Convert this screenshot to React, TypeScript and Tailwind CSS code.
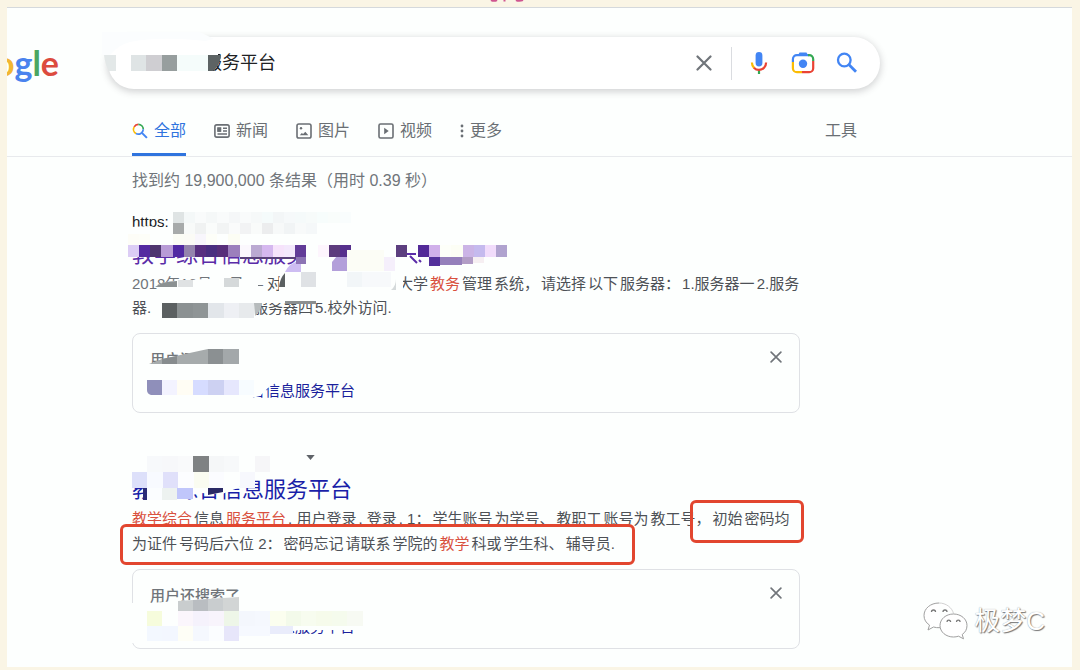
import React from "react";

type Cell = [number, number, number, number, string];

const PAPER = "#fdfffe";

function Mosaic({ box, cells, children }: { box: string; cells: Cell[]; children?: React.ReactNode }) {
  const [, , w, h] = box.split(" ");
  return (
    <svg
      aria-hidden="true"
      viewBox={box}
      width={w}
      height={h}
      className="pointer-events-none absolute -left-3 top-0 max-w-none"
    >
      {children}
      <g shapeRendering="crispEdges">
        {cells.map(([x, y, cw, ch, fill], i) => (
          <rect key={i} x={x} y={y} width={cw} height={ch} fill={fill} />
        ))}
      </g>
    </svg>
  );
}

function row(x: number, y: number, size: number, h: number, fills: string[]): Cell[] {
  return fills
    .map((f, i): Cell => {
      const left = Math.round(x + i * size);
      return [left, y, Math.round(x + (i + 1) * size) - left, h, f];
    })
    .filter((c) => c[4] !== "");
}

function CloseIcon({ size }: { size: number }) {
  return (
    <svg viewBox="0 0 16 16" width={size} height={size} fill="none" stroke="#70757a" strokeWidth="2.2" strokeLinecap="round" aria-hidden="true">
      <path d="M1.5 1.5l13 13M14.5 1.5l-13 13" />
    </svg>
  );
}

function SearchBar() {
  return (
    <form className="relative flex h-[52px] w-[772px] items-center rounded-full bg-white pr-[21px] pl-[96px] shadow-[0_2px_7px_1px_rgba(64,60,67,0.22)]">
      <input
        aria-label="搜索"
        defaultValue="服务平台"
        className="min-w-0 flex-1 bg-transparent text-[18px] text-[#202124] outline-none"
      />
      <svg aria-hidden="true" viewBox="92 27 150 72" width="150" height="72" className="pointer-events-none absolute -top-[10px] -left-[16px]">
        <path d="M102 32H200L214 39L205 41Q160 36 130 42Q118 45 110 55H102Z" fill="#fbfdfe" />
        <path d="M130 53H218V62Q216 70 208 73H130Z" fill="#ffffff" />
        <g shapeRendering="crispEdges">
          <rect x="131" y="55" width="15" height="16" fill="#dfe4e5" />
          <rect x="146" y="55" width="16" height="16" fill="#cfced2" />
          <rect x="162" y="55" width="15" height="16" fill="#979e9e" />
          <rect x="177" y="55" width="31" height="16" fill="#f5fcfb" />
        </g>
        <path d="M104 55H116V71H109Q105 64 104 55Z" fill="#e3e8e8" />
        <path d="M208 55H221Q220 66 213 71H208Z" fill="#5d6364" />
      </svg>
      <button type="button" aria-label="清除" className="grid size-6 place-items-center">
        <CloseIcon size={16} />
      </button>
      <span className="mr-[15px] ml-[15px] h-[33px] w-px bg-[#dadce0]" />
      <div className="flex gap-5">
        <button type="button" aria-label="语音搜索" className="grid size-6 place-items-center">
          <svg viewBox="0 0 24 24" width="24" height="24" fill="none" aria-hidden="true">
            <rect x="8.6" y="1" width="6.8" height="14.4" rx="3.4" fill="#4285f4" />
            <path d="M12 18.6V23" stroke="#34a853" strokeWidth="2.2" />
            <path d="M4.9 11.6c0 2.3.9 4 2.2 5.3" stroke="#fbbc04" strokeWidth="2.2" />
            <path d="M6.9 16.7c1.3 1.4 3.1 2.2 5.1 2.2 4 0 7.1-3.2 7.1-7.3" stroke="#ea4335" strokeWidth="2.2" />
          </svg>
        </button>
        <button type="button" aria-label="按图搜索" className="grid size-6 place-items-center">
          <svg viewBox="0 0 24 24" width="24" height="24" fill="none" strokeWidth="2.2" aria-hidden="true">
            <path d="M1.9 11V8.200a4 4 0 0 1 4-4H18" stroke="#4285f4" />
            <path d="M7 4.200L8.500 1.500h7L17 4.200z" fill="#4285f4" />
            <path d="M17 4.200h1.200a4 4 0 0 1 4 4V10" stroke="#34a853" />
            <path d="M22.200 10v7.200a4 4 0 0 1-4 4H11" stroke="#ea4335" />
            <path d="M1.900 11v6.200a4 4 0 0 0 4 4H11" stroke="#fbbc04" />
            <circle cx="12" cy="12.700" r="4.200" fill="#4285f4" />
          </svg>
        </button>
        <button type="submit" aria-label="Google 搜索" className="grid size-6 place-items-center">
          <svg viewBox="0 0 24 24" width="24" height="24" fill="none" stroke="#4285f4" strokeWidth="2.3" aria-hidden="true">
            <circle cx="9.3" cy="9" r="6.300" />
            <path d="M13.8 13.5l7.200 7.200" strokeWidth="2.8" />
          </svg>
        </button>
      </div>
    </form>
  );
}

function Tabs() {
  const item = "flex h-[50px] items-center gap-1.5 text-[#6a6f74]";
  const icon = "shrink-0";
  return (
    <nav className="flex w-full max-w-[725px] items-start justify-between text-[16px] leading-6">
      <div className="flex gap-7">
        <a href="#all" className="flex h-[50px] items-center gap-1.5 border-b-[3px] border-[#2f74de] pt-[3px] text-[#2f74de]">
          <svg className={icon} viewBox="0 0 16 16" width="16" height="16" fill="none" strokeWidth="1.7" aria-hidden="true">
            <path d="M2.2 3.8A5 5 0 0 1 6.300 1.300" stroke="#ea4335" />
            <path d="M6.3 1.3a5 5 0 0 1 5 5" stroke="#34a853" />
            <path d="M2.2 3.8A5 5 0 0 0 4 10.600" stroke="#fbbc04" />
            <path d="M11.3 6.3a5 5 0 0 1-7.300 4.300" stroke="#4285f4" />
            <path d="M9.9 9.9l5 5" stroke="#4285f4" strokeWidth="2" />
          </svg>
          全部
        </a>
        <a href="#news" className={item}>
          <svg className={icon} viewBox="0 0 16 16" width="16" height="16" fill="none" stroke="currentColor" strokeWidth="1.6" aria-hidden="true">
            <rect x=".9" y="1.9" width="14.2" height="12.2" rx="1.8" />
            <path d="M3.5 6H7M3.5 8H7M9 5.3h4M9 8h4M3.5 11h9.5" strokeWidth="1.5" />
            <rect x="4" y="5" width="2.5" height="3" fill="currentColor" />
          </svg>
          新闻
        </a>
        <a href="#images" className={item}>
          <svg className={icon} viewBox="0 0 16 16" width="16" height="16" fill="none" stroke="currentColor" strokeWidth="1.6" aria-hidden="true">
            <rect x="1" y="1" width="14" height="14" rx="1.8" />
            <circle cx="5" cy="5.3" r="1.2" fill="currentColor" stroke="none" />
            <path d="M3.8 12.2l2-2.300 1.300 1.200 2.200-2.300 3 3.400z" fill="currentColor" stroke="none" />
          </svg>
          图片
        </a>
        <a href="#videos" className={item}>
          <svg className={icon} viewBox="0 0 16 16" width="16" height="16" fill="none" stroke="currentColor" strokeWidth="1.6" aria-hidden="true">
            <rect x="1" y="1" width="14" height="14" rx="1.5" />
            <path d="M6.2 4.8v6.400L10.700 8z" fill="currentColor" stroke="none" />
          </svg>
          视频
        </a>
        <button type="button" className={item}>
          <svg className={icon} viewBox="0 0 4 16" width="4" height="16" fill="currentColor" aria-hidden="true">
            <circle cx="2" cy="3" r="1.4" />
            <circle cx="2" cy="8" r="1.4" />
            <circle cx="2" cy="13" r="1.4" />
          </svg>
          更多
        </button>
      </div>
      <button type="button" className={item}>工具</button>
    </nav>
  );
}

function Em({ children }: { children: React.ReactNode }) {
  return <em className="text-[#d9513f] not-italic">{children}</em>;
}

function RelatedCard({ label }: { label: string }) {
  return (
    <div className="mt-[13px] flex h-20 justify-between rounded-lg border border-[#dfe1e5] pt-[14px] pr-[17px] pl-[17px]">
      <div>
        <h4 className="font-medium text-[#70757a]">用户还搜索了</h4>
        <a href="#related" className="mt-[7px] block pl-[100px] text-[#1a1f9c]">{label}</a>
      </div>
      <button type="button" aria-label="关闭" className="mt-[2px] grid size-[13px] place-items-center self-start">
        <CloseIcon size={12} />
      </button>
    </div>
  );
}

const firstCells: Cell[] = [
  ...row(173, 212, 11.1, 11, ["#dfe4e4", "#f4f8f8", "#f9fbfb", "#f5f8f8", "#f9fbfb", "#f5f7f8", "#f9fbfb", "#f6f9f9", "#f5fbfb", "#f3f6f7", "#f6f9fa", "#f5fafa", "#f7fbfa", "#f7fdfc", "#f9fdfb", "#f9fdfd"]),
  ...row(173, 223, 11.1, 11, ["#a7aaaa", "#f8faf9", "#f0f2f2", "#fafcfb", "#f2f4f4", "#fafbfb", "#f2f3f4", "#f9fbfa", "#ecedee", "#f7f9f9", "#f1f4f5", "#f8fafa", "#f5f8f9"]),
  ...row(128, 234, 11.15, 11, ["#fdfdf7", "#fdfef8", "", "", "#fbfcf5", "#fbfbf6", "#f8f6fc", "#fdfef8", "", "#fcfdf4"]),
  ...row(128, 245, 11.15, 12, [
    "#dccdf5", "#542aa0", "#4f366f", "#b89bd6", "#5129a3", "#9484ad", "#583080", "#4a2f80", "#572f7a", "#9c7fbc", "#fbf8fd", "#bbaad2",
    "#d5b8ef", "#f6e3fb", "#f3e8fc", "#623c98", "", "#fdf5fd", "#5d3c7d", "#56308c", "", "", "", "", "#5c3f7f", "", "#532a98",
    "#d0b0ea", "#fdfff9", "#fcfef5", "#cbb4e6", "#c5baee", "#f1dcfb", "#b0a3cf",
  ]),
  [240, 257, 56, 2, "#59417a"],
  [296, 257, 10, 7, "#8c74b4"],
  [347, 250, 37, 21, "#fcfdf6"],
  [384, 257, 11, 14, "#f5effb"],
  [429, 257, 11, 9, "#53309b"],
  [440, 257, 22, 8, "#9580bb"],
  [462, 257, 11, 7, "#b29dc6"],
  [473, 257, 11, 6, "#f6eff2"],
  [301, 272, 15, 15, "#dfe2e5"],
  [347, 272, 15, 15, "#f2f6f8"],
  [362, 272, 29, 15, "#f7f9fb"],
  [178, 280, 15, 7, "#dfe2e3"],
  [224, 278, 15, 9, "#d5d9da"],
  ...row(162, 303, 15.4, 15, ["#5b6061", "#8b9192", "#8f9596", "#e2e6ea", "#eef0f4", "#e7eaec"]),
  [285, 301, 31, 3, "#8b8f90"],
];

const firstCardCells: Cell[] = [
  [208, 349, 15, 15, "#8b9092"],
  [223, 349, 16, 15, "#a3a8aa"],
  ...row(162, 380, 15.4, 15, ["#f3f3ff", "#fffdf4", "#d6dcff", "#cdd1f2", "#e6e7fd", "#f7fcff"]),
];

const secondCells: Cell[] = [
  ...row(147, 456, 15.4, 16, ["#f7f9fb", "#f7f8fa", "#f9fafb", "#7f8283", "#f5f7f8", "#f7f9fa", "", "#f6f6f8"]),
  ...row(132, 472, 15.4, 16, ["#dde0fa", "#f8faff", "#e0e0fa", "#fcfdff", "#fafcf1", "#fbfcff", "", "#f7f8fd"]),
  [143, 488, 4, 12, "#2a2b76"],
  [147, 488, 15, 12, "#fbfdff"],
  [162, 488, 15, 12, "#edf2f0"],
  [177, 488, 16, 11, "#c0c6fb"],
  ...row(147, 611, 15.4, 15, ["#f6fcdc", "", "#fbf6fc", "#f5f2fc", "#f8f4fc", "#eef6e8", "#f4f7fd", "#f5f8fe", "#fbfeef", "#f3faea", "#f7fcef", "#f6fbeb", "#f5fbed", "#f7faf3"]),
  ...row(147, 626, 15.4, 15, ["#f3f8ff", "#f3f7ff", "#fefef6", "#f5f8fe", "#fbfdff", "#e7e6fa"]),
  [239, 626, 31, 10, "#f6f9ff"],
  [270, 626, 23, 8, "#e9ecfb"],
];

export default function App() {
  const title = "mt-[7px] text-[22px] leading-7";
  const line = "flex gap-x-[2px] whitespace-nowrap";
  return (
    <div className="relative bg-[#faf5e5] pt-[7px] pr-2 pb-1 pl-[7px] font-['Liberation_Sans','Noto_Sans_CJK_SC',sans-serif]">
      <svg aria-hidden="true" viewBox="0 0 40 4" width="40" height="4" className="absolute top-0 left-[488px]" fill="none" stroke="#cf5590" strokeWidth="2">
        <path d="M3 0Q6 1.500 9 0M16.500 0v1.500M28 0Q31 1.500 35 0" />
      </svg>
      <div className="relative overflow-hidden border-t border-[#d5d9dc] bg-[#fdfffe] pb-[18px]">
        <header className="border-b border-[#e8eaed]">
          <div className="flex items-center gap-[49px] pt-[29px]">
            <a href="#home" aria-label="Google" className="flex w-[52px] shrink-0 justify-end overflow-hidden font-['Lato',sans-serif] text-[34px] leading-[46px] font-bold">
              <span className="text-[#f2b632]">o</span>
              <span className="text-[#4a83ee]">g</span>
              <span className="text-[#4ba660]">l</span>
              <span className="text-[#dc4b3e]">e</span>
            </a>
            <SearchBar />
          </div>
          <div className="pt-[17px] pl-[125px]">
            <Tabs />
          </div>
        </header>

        <main className="w-full max-w-[793px] pt-3 pl-[125px] text-[15px] leading-6 text-[#4d5156]">
          <p className="text-[16px] text-[#70757a]">找到约 19,900,000 条结果（用时 0.39 秒）</p>

          <article className="relative mt-[17px]">
            <cite className="block text-[#202124] not-italic">https:</cite>
            <h3 className={title}>
              <a href="#result-1" className="text-[#5a2ca8]">教学综合信息服务</a>
            </h3>
            <p className={`mt-[3px] ${line}`}>
              <span className="w-[264px] shrink-0 text-[#70757a]">2018年10月16日 — <span className="text-[#4d5156]">对</span></span>
              <span>大学</span>
              <Em>教务</Em>
              <span>管理</span>
              <span>系统，</span>
              <span>请选择</span>
              <span>以下</span>
              <span>服务器：</span>
              <span>1.服务器一</span>
              <span>2.服务</span>
            </p>
            <p className={line}>
              <span className="w-[119px] shrink-0">器.</span>
              <span>服务器四</span>
              <span>5.校外访问.</span>
            </p>
            <RelatedCard label="合信息服务平台" />
            <Mosaic box="120 210 400 204" cells={[...firstCells, ...firstCardCells]}>
              <path d="M130 227L150 226L172 231V257H130Z" fill={PAPER} />
              <path d="M128 240H310V257H128Z" fill={PAPER} />
              <path d="M157 285Q168 280 190 280L205 279H258V292H157Z" fill={PAPER} />
              <path d="M155 287Q162 281 177 281V287Z" fill="#8b9192" />
              <path d="M279 278Q288 262 310 258H395L403 277V290L396 298H279Z" fill={PAPER} />
              <path d="M285 272Q289 263 301 260V272Z" fill="#cdbdf2" />
              <path d="M279 287Q280 278 285 273V287Z" fill="#5b6061" />
              <path d="M332 271V262L342 250H347V271Z" fill="#b39fda" />
              <path d="M391 290Q396 286 396 279V290Z" fill="#d5dadb" />
              <path d="M160 297H330V303H256V320H160Z" fill={PAPER} />
              <path d="M254 303H262Q261 311 255 316Z" fill="#b6bbbc" />
              <path d="M407 254H416M410 256L417 263M419 260L421 262" stroke="#5a2ca8" strokeWidth="2" fill="none" />
              <path d="M149 364L162 360L208 349H242V368H149Z" fill={PAPER} />
              <path d="M149 364L162 359L208 349V364Z" fill="#a6abac" />
              <path d="M162 364V359L177 356V364Z" fill="#878c8e" />
              <path d="M147 380H280L268 388L260 396L248 399H147Z" fill={PAPER} />
              <path d="M147 380H162V395H151Q147 394 147 390Z" fill="#8f8fba" />
            </Mosaic>
          </article>

          <article className="relative mt-8">
            <div className="flex h-6 items-center pl-[172px]">
              <button type="button" aria-label="更多选项" className="grid h-3 w-3 place-items-center">
                <svg viewBox="0 0 10 6" width="9" height="5" aria-hidden="true"><path d="M0 0h10L5 6z" fill="#5f6368" /></svg>
              </button>
            </div>
            <h3 className={title}>
              <a href="#result-2" className="text-[#1a1fa8]">教学综合信息服务平台</a>
            </h3>
            <p className={`mt-[3px] ${line}`}>
              <Em>教学综合</Em>
              <span>信息</span>
              <Em>服务平台</Em>
              <span>. 用户登录</span>
              <span>. 登录</span>
              <span>. 1：</span>
              <span>学生账号</span>
              <span>为学号、</span>
              <span>教职工</span>
              <span>账号为</span>
              <span>教工号，</span>
              <span>初始</span>
              <span>密码均</span>
            </p>
            <p className={`mt-px ${line}`}>
              <span>为证件</span>
              <span>号码后六位 2：</span>
              <span>密码忘记</span>
              <span>请联系</span>
              <span>学院的</span>
              <Em>教学</Em>
              <span>科或</span>
              <span>学生科、</span>
              <span>辅导员.</span>
            </p>
            <RelatedCard label="合信息服务平台" />
            <Mosaic box="120 445 400 204" cells={secondCells}>
              <path d="M147 470H262L238 488L222 494L200 493L186 497V502H147Z" fill={PAPER} />
              <path d="M208 488H223V492L208 495Z" fill="#2a2a66" />
              <path d="M130 603H150L244 596L300 610H366V630H300L240 638L178 643H130Z" fill={PAPER} />
              <path d="M178 611V601L193 600V611Z" fill="#c9cdce" />
              <path d="M193 611V600L208 599V611Z" fill="#b9bdc1" />
              <path d="M208 611V599L223 598V611Z" fill="#c9cdcf" />
              <path d="M223 611V598L239 597V611Z" fill="#d2d5d5" />
            </Mosaic>
            <span className="absolute top-[79px] -left-[12px] h-[41px] w-[515px] rounded-md border-[3px] border-[#e2462f]" />
            <span className="absolute top-[55px] left-[558px] h-[43px] w-[114px] rounded-md border-[3px] border-[#e2462f]" />
          </article>
        </main>

        <div className="absolute right-[27px] bottom-[26px] flex items-center gap-[6px]">
          <svg viewBox="0 0 46 40" width="46" height="40" fill="#fff" stroke="#a0a0a0" strokeWidth="1" aria-hidden="true">
            <path d="M17 2C8.500 2 2 7.500 2 14.500c0 4 2 7.300 5.500 9.600L6 29l5.500-3c2 .6 4 .8 6.500.7" />
            <path d="M17 2c7 0 13 4.500 14.500 10.500" stroke="#d2d2d2" />
            <path d="M31.500 13C24 13 18 18 18 24.500S24 36 31.500 36c1.800 0 3.400-.3 5-.8l5 2.600-1.300-4.300c3.200-2.200 4.800-5.300 4.800-9C45 18 39 13 31.500 13z" />
            <path d="M9.500 11a2 2 0 0 1 4 0M21 11a2 2 0 0 1 4 0M25 21a1.800 1.800 0 0 1 3.600 0M34.500 21a1.800 1.800 0 0 1 3.600 0" fill="none" stroke="#777" strokeWidth="1.3" />
          </svg>
          <span className="text-[26px] leading-9 text-white [text-shadow:1px_1px_1px_#777,0_0_1px_#999]">极梦C</span>
        </div>
      </div>
    </div>
  );
}
